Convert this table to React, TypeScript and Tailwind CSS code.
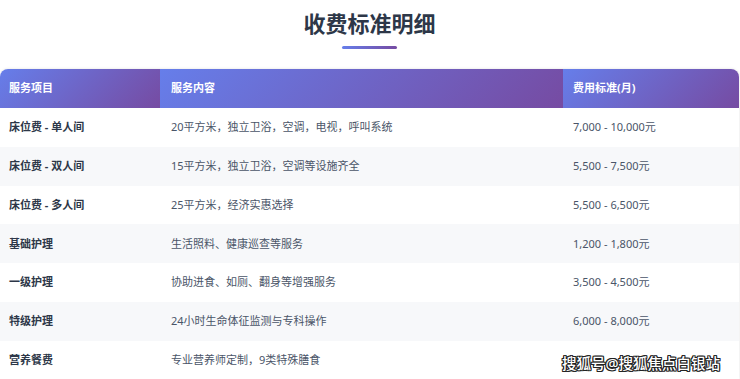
import React from "react";

const rows: [string, string, string][] = [
  ["床位费 - 单人间", "20平方米，独立卫浴，空调，电视，呼叫系统", "7,000 - 10,000元"],
  ["床位费 - 双人间", "15平方米，独立卫浴，空调等设施齐全", "5,500 - 7,500元"],
  ["床位费 - 多人间", "25平方米，经济实惠选择", "5,500 - 6,500元"],
  ["基础护理", "生活照料、健康巡查等服务", "1,200 - 1,800元"],
  ["一级护理", "协助进食、如厕、翻身等增强服务", "3,500 - 4,500元"],
  ["特级护理", "24小时生命体征监测与专科操作", "6,000 - 8,000元"],
  ["营养餐费", "专业营养师定制，9类特殊膳食", ""],
];

const font = { fontFamily: '"Noto Sans", "Noto Sans CJK SC", sans-serif' };

export default function App() {
  return (
    <div className="relative w-[740px] h-[379px] overflow-hidden bg-white" style={font}>
      <div className="w-[739px] flex flex-col items-center pt-[12px]">
        <h1 className="text-[22px] leading-[22px] font-bold text-[#2d3748]">收费标准明细</h1>
        <div className="mt-[12px] h-[3px] w-[55px] rounded-full bg-[linear-gradient(90deg,#667eea,#764ba2)]" />
      </div>
      <div className="mt-[20px] w-[739px] rounded-t-[8px] overflow-hidden shadow-[0_0_3px_rgba(0,0,0,0.12)]">
        <div className="grid grid-cols-[160px_403px_176px] h-[39px] text-[11px] font-bold text-white">
          <div className="flex items-center pl-[9px] bg-[linear-gradient(135deg,#667eea_0%,#764ba2_100%)]">服务项目</div>
          <div className="flex items-center pl-[11px] bg-[linear-gradient(135deg,#667eea_0%,#764ba2_100%)]">服务内容</div>
          <div className="flex items-center pl-[10px] bg-[linear-gradient(135deg,#667eea_0%,#764ba2_100%)]">费用标准(月)</div>
        </div>
        {rows.map((r, i) => (
          <div
            key={i}
            className={
              "grid grid-cols-[160px_403px_176px] h-[38.8px] text-[11px] " +
              (i % 2 === 1 ? "bg-[#f7f8fa]" : "bg-white")
            }
          >
            <div className="flex items-center pl-[9px] font-bold text-[#2d3748]">{r[0]}</div>
            <div className="flex items-center pl-[11px] text-[#4a5568]">{r[1]}</div>
            <div className="flex items-center pl-[10px] text-[#4a5568]">{r[2]}</div>
          </div>
        ))}
      </div>
      <div
        className="absolute left-[562px] top-[353px] text-[14.5px] leading-[20px] font-medium text-white whitespace-nowrap"
        style={{
          textShadow:
            "1px 0 0 #222, -1px 0 0 #222, 0 1px 0 #222, 0 -1px 0 #222, 1px 1px 0 #222, -1px -1px 0 #222, 1px -1px 0 #222, -1px 1px 0 #222",
        }}
      >
        搜狐号@搜狐焦点白银站
      </div>
    </div>
  );
}
